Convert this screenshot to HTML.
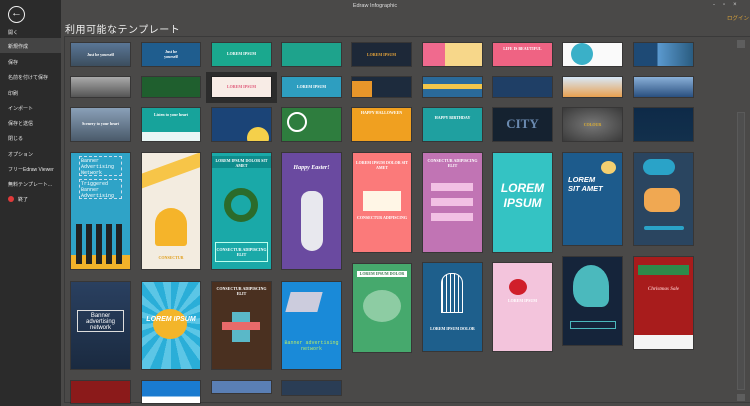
<!DOCTYPE html>
<html><head><meta charset="utf-8"><style>
*{margin:0;padding:0;box-sizing:border-box}
body{width:750px;height:406px;overflow:hidden;background:#4a4948;font-family:"Liberation Sans","Noto Sans CJK JP",sans-serif;position:relative}
.sb{position:absolute;left:0;top:0;width:61px;height:406px;background:#2b2b2b}
.mi{position:absolute;left:8px;font-size:5px;color:#e6e6e6;white-space:nowrap}
.sel{position:absolute;left:0;top:38px;width:61px;height:15px;background:#444}
.c{position:absolute;overflow:hidden;color:#fff;font-family:"Liberation Serif",serif;font-weight:bold;font-size:4px;text-align:center;box-shadow:0 0 0 1px rgba(0,0,0,.25)}
.t{position:absolute;left:0;right:0}
</style></head><body>
<div class="sb">
 <div style="position:absolute;left:8px;top:6px;width:17px;height:17px;border:1.5px solid #eee;border-radius:50%;color:#eee;font-size:11px;line-height:13px;text-align:center">&#8592;</div>
 <div class="sel"></div>
 <div class="mi" style="top:29px">開く</div>
 <div class="mi" style="top:43px">新規作成</div>
 <div class="mi" style="top:59px">保存</div>
 <div class="mi" style="top:74px">名前を付けて保存</div>
 <div class="mi" style="top:90px">印刷</div>
 <div class="mi" style="top:105px">インポート</div>
 <div class="mi" style="top:120px">保存と送信</div>
 <div class="mi" style="top:135px">閉じる</div>
 <div class="mi" style="top:151px">オプション</div>
 <div class="mi" style="top:166px">フリーEdraw Viewer</div>
 <div class="mi" style="top:181px">無料テンプレート...</div>
 <div style="position:absolute;left:8px;top:196px;width:6px;height:6px;border-radius:50%;background:#e03a3a"></div>
 <div class="mi" style="top:196px;left:18px">終了</div>
</div>
<div style="position:absolute;left:0;right:0;top:3px;text-align:center;font-size:5.5px;color:#ddd">Edraw Infographic</div>
<div style="position:absolute;left:713px;top:2px;font-size:6px;color:#ccc;letter-spacing:8px;white-space:nowrap">-▫×</div>
<div style="position:absolute;left:727px;top:14px;font-size:5.5px;color:#d9a23a;white-space:nowrap">ログイン</div>
<div style="position:absolute;left:65px;top:21px;font-size:10px;color:#eee;letter-spacing:.5px">利用可能なテンプレート</div>
<div style="position:absolute;left:64px;top:36px;width:686px;height:367px;border:1px solid #3a3a3a;border-right:none"></div>
<div style="position:absolute;left:737px;top:40px;width:8px;height:8px;background:#5e5e5e"></div>
<div style="position:absolute;left:737px;top:112px;width:8px;height:278px;background:#4e4e4e;border:1px solid #5a5a5a"></div>
<div style="position:absolute;left:737px;top:394px;width:8px;height:7px;background:#5e5e5e"></div>
<div style="position:absolute;left:206px;top:72px;width:71px;height:31px;background:#2c2c2c"></div>

<!-- row1 -->
<div class="c" style="left:71px;top:43px;width:59px;height:23px;background:linear-gradient(#5a7696,#3c4e5e)"><div class="t" style="top:9px">Just be yourself</div></div>
<div class="c" style="left:142px;top:43px;width:58px;height:23px;background:#1f5d8e"><div class="t" style="top:6px">Just be<br>yourself</div></div>
<div class="c" style="left:212px;top:43px;width:59px;height:23px;background:#1aa88e"><div class="t" style="top:8px">LOREM IPSUM</div></div>
<div class="c" style="left:282px;top:43px;width:59px;height:23px;background:#1ea38c"></div>
<div class="c" style="left:352px;top:43px;width:59px;height:23px;background:#1d2838"><div class="t" style="top:9px;color:#e8a53a">LOREM IPSUM</div></div>
<div class="c" style="left:423px;top:43px;width:59px;height:23px;background:#f7d78a"><div style="position:absolute;left:0;top:0;width:22px;height:23px;background:#f06a8e"></div></div>
<div class="c" style="left:493px;top:43px;width:59px;height:23px;background:#ef6383"><div class="t" style="top:3px">LIFE IS BEAUTIFUL</div></div>
<div class="c" style="left:563px;top:43px;width:59px;height:23px;background:#fafafa"><div style="position:absolute;left:8px;top:0;width:22px;height:22px;border-radius:50%;background:#3ab0c8"></div></div>
<div class="c" style="left:634px;top:43px;width:59px;height:23px;background:linear-gradient(90deg,#1e4a75 40%,#5b9ad0 40%,#2a5c80)"></div>
<!-- row2 -->
<div class="c" style="left:71px;top:77px;width:59px;height:20px;background:linear-gradient(#aaa,#555)"></div>
<div class="c" style="left:142px;top:77px;width:58px;height:20px;background:#1f5f2e"></div>
<div class="c" style="left:212px;top:77px;width:59px;height:20px;background:#f8ece6"><div class="t" style="top:7px;color:#e05a7a">LOREM IPSUM</div></div>
<div class="c" style="left:282px;top:77px;width:59px;height:20px;background:#2e9ec0"><div class="t" style="top:7px">LOREM IPSUM</div></div>
<div class="c" style="left:352px;top:77px;width:59px;height:20px;background:#1d2b3d"><div style="position:absolute;left:0;top:4px;width:20px;height:16px;background:#e8962a"></div></div>
<div class="c" style="left:423px;top:77px;width:59px;height:20px;background:#2a6a9a"><div style="position:absolute;left:0;right:0;top:7px;height:5px;background:#f2c64a"></div></div>
<div class="c" style="left:493px;top:77px;width:59px;height:20px;background:#1f3f66"></div>
<div class="c" style="left:563px;top:77px;width:59px;height:20px;background:linear-gradient(#d8e8f8,#e8a050)"></div>
<div class="c" style="left:634px;top:77px;width:59px;height:20px;background:linear-gradient(#8ab0d8,#2a5080)"></div>
<!-- row3 -->
<div class="c" style="left:71px;top:108px;width:59px;height:33px;background:linear-gradient(#8aa0b8,#4a5a6a)"><div class="t" style="top:13px">Scenery to your heart</div></div>
<div class="c" style="left:142px;top:108px;width:58px;height:33px;background:#17a39b"><div class="t" style="top:4px">Listen to your heart</div><div style="position:absolute;left:0;right:0;bottom:0;height:9px;background:#fff;opacity:.9"></div></div>
<div class="c" style="left:212px;top:108px;width:59px;height:33px;background:#1b4477"><div style="position:absolute;right:2px;bottom:-8px;width:22px;height:22px;border-radius:50%;background:#f5d04a"></div></div>
<div class="c" style="left:282px;top:108px;width:59px;height:33px;background:#2e7d3e"><div style="position:absolute;left:5px;top:4px;width:20px;height:20px;border-radius:50%;border:2px solid #fff"></div></div>
<div class="c" style="left:352px;top:108px;width:59px;height:33px;background:#f0a020"><div class="t" style="top:2px;color:#fff">HAPPY HALLOWEEN</div></div>
<div class="c" style="left:423px;top:108px;width:59px;height:33px;background:#1fa0a0"><div class="t" style="top:7px">HAPPY BIRTHDAY</div></div>
<div class="c" style="left:493px;top:108px;width:59px;height:33px;background:#152230"><div class="t" style="top:8px;font-size:13px;color:#6a8ab0">CITY</div></div>
<div class="c" style="left:563px;top:108px;width:59px;height:33px;background:radial-gradient(#777,#3a3a3a)"><div class="t" style="top:14px;color:#e0b030">COLOUR</div></div>
<div class="c" style="left:634px;top:108px;width:59px;height:33px;background:linear-gradient(#0e2a48,#12304c)"></div>
<!-- tall row4 -->
<div class="c" style="left:71px;top:153px;width:59px;height:116px;background:#2fa3c7;font-family:'Liberation Mono',monospace;font-weight:normal;font-size:5px;text-align:left"><div style="position:absolute;left:8px;top:3px;width:43px;height:20px;border:1px dashed #cde;padding:1px">Banner Advertising Network</div><div style="position:absolute;left:8px;top:26px;width:43px;height:20px;border:1px dashed #cde;padding:1px">Triggered Banner Advertising</div><div style="position:absolute;left:0;right:0;bottom:0;height:14px;background:#f2b22a"></div><div style="position:absolute;left:5px;bottom:5px;width:50px;height:40px;background:repeating-linear-gradient(90deg,#222 0 6px,transparent 6px 10px)"></div></div>
<div class="c" style="left:142px;top:153px;width:58px;height:116px;background:#f3ece0"><div style="position:absolute;left:-10px;top:10px;width:80px;height:14px;background:#f7c548;transform:rotate(-20deg)"></div><div style="position:absolute;left:13px;top:55px;width:32px;height:38px;background:#f5b42a;border-radius:16px 16px 3px 3px"></div><div class="t" style="top:102px;color:#e0a020">CONSECTUR</div></div>
<div class="c" style="left:212px;top:153px;width:59px;height:116px;background:#1aa9a8"><div class="t" style="top:3px;height:12px;background:#0e8c8c;padding-top:2px">LOREM IPSUM DOLOR SIT AMET</div><div style="position:absolute;left:12px;top:35px;width:34px;height:34px;border-radius:50%;border:7px solid #2b6b2b"></div><div style="position:absolute;left:3px;top:89px;width:53px;height:20px;border:1px solid #bfe;padding-top:4px">CONSECTUR ADIPISCING ELIT</div></div>
<div class="c" style="left:282px;top:153px;width:59px;height:116px;background:#6a4aa0"><div class="t" style="top:12px;font-style:italic;font-size:6px">Happy Easter!</div><div style="position:absolute;left:19px;top:38px;width:22px;height:60px;background:#e8e8ee;border-radius:10px 10px 12px 12px"></div></div>
<div class="c" style="left:353px;top:153px;width:58px;height:99px;background:#fb7a7a"><div class="t" style="top:7px">LOREM IPSUM DOLOR SIT AMET</div><div style="position:absolute;left:10px;top:38px;width:38px;height:20px;background:#fff6e6"></div><div class="t" style="top:62px">CONSECTUR ADIPISCING</div></div>
<div class="c" style="left:423px;top:153px;width:59px;height:99px;background:#c174b4"><div class="t" style="top:5px">CONSECTUR ADIPISCING ELIT</div><div style="position:absolute;left:8px;top:30px;width:42px;height:8px;background:#f2c0e4"></div><div style="position:absolute;left:8px;top:45px;width:42px;height:8px;background:#f2c0e4"></div><div style="position:absolute;left:8px;top:60px;width:42px;height:8px;background:#f2c0e4"></div></div>
<div class="c" style="left:493px;top:153px;width:59px;height:99px;background:#34c3c3;font-family:'Liberation Sans',sans-serif;font-style:italic"><div class="t" style="top:28px;font-size:12px;line-height:15px">LOREM<br>IPSUM</div></div>
<div class="c" style="left:563px;top:153px;width:59px;height:92px;background:#1d5b8c;font-family:'Liberation Sans',sans-serif;font-style:italic"><div style="position:absolute;right:6px;top:8px;width:15px;height:13px;background:#f4d070;border-radius:50%"></div><div class="t" style="top:22px;font-size:7.5px;text-align:left;left:5px">LOREM<br>SIT AMET</div></div>
<div class="c" style="left:634px;top:153px;width:59px;height:92px;background:#2a4560"><div style="position:absolute;left:9px;top:6px;width:32px;height:16px;background:#2aa3c8;border-radius:8px"></div><div style="position:absolute;left:10px;top:35px;width:36px;height:24px;background:#f0a852;border-radius:8px"></div><div style="position:absolute;left:10px;top:73px;width:40px;height:4px;background:#2aa3c8;border-radius:2px"></div></div>
<!-- row5 -->
<div class="c" style="left:71px;top:282px;width:59px;height:87px;background:linear-gradient(#2a4060,#1a2a40);font-family:'Liberation Sans',sans-serif;font-size:6px;font-weight:normal"><div style="position:absolute;left:6px;top:28px;width:47px;height:22px;border:1px solid #ddd;padding-top:2px">Banner advertising network</div></div>
<div class="c" style="left:142px;top:282px;width:58px;height:87px;background:repeating-conic-gradient(from 0deg at 50% 45%,#2aaed8 0 12deg,#5cc6e6 12deg 24deg)"><div style="position:absolute;left:11px;top:27px;width:34px;height:30px;border-radius:50%;background:#f3b52a"></div><div class="t" style="top:34px;font-family:'Liberation Sans',sans-serif;font-style:italic;font-size:7px">LOREM IPSUM</div></div>
<div class="c" style="left:212px;top:282px;width:59px;height:87px;background:#4a3020"><div class="t" style="top:4px">CONSECTUR ADIPISCING ELIT</div><div style="position:absolute;left:20px;top:30px;width:18px;height:30px;background:#5ab8c8"></div><div style="position:absolute;left:10px;top:40px;width:38px;height:8px;background:#e86a6a"></div></div>
<div class="c" style="left:282px;top:282px;width:59px;height:87px;background:#1a8ad8"><div style="position:absolute;left:6px;top:10px;width:32px;height:20px;background:#ccd;transform:skewX(-15deg)"></div><div class="t" style="top:58px;color:#b6ea6a;font-family:'Liberation Mono',monospace;font-weight:normal;font-size:5px">Banner advertising network</div></div>
<div class="c" style="left:353px;top:264px;width:58px;height:88px;background:#46a96d"><div class="t" style="top:7px;left:4px;right:4px;background:#fff;color:#3a7a50;height:6px">LOREM IPSUM DOLOR</div><div style="position:absolute;left:10px;top:26px;width:38px;height:32px;border-radius:50%;background:#9fd4b0;opacity:.8"></div></div>
<div class="c" style="left:423px;top:263px;width:59px;height:88px;background:#1e5f8c"><div style="position:absolute;left:18px;top:10px;width:22px;height:40px;border:1.5px solid #fff;border-radius:10px 10px 0 0;background:repeating-linear-gradient(90deg,#fff 0 1px,transparent 1px 4px)"></div><div class="t" style="top:63px">LOREM IPSUM DOLOR</div></div>
<div class="c" style="left:493px;top:263px;width:59px;height:88px;background:#f3c4dc"><div style="position:absolute;left:16px;top:16px;width:18px;height:16px;border-radius:50%;background:#d01e2a"></div><div class="t" style="top:35px">LOREM IPSUM</div></div>
<div class="c" style="left:563px;top:257px;width:59px;height:88px;background:#15243a"><div style="position:absolute;left:10px;top:8px;width:36px;height:42px;background:#4bb9bd;border-radius:50% 50% 20% 40%"></div><div style="position:absolute;left:7px;top:64px;width:46px;height:8px;border:1px solid #4bb9bd"></div></div>
<div class="c" style="left:634px;top:257px;width:59px;height:92px;background:#a81c1c"><div style="position:absolute;left:4px;top:8px;width:51px;height:10px;background:#2e8a4a"></div><div class="t" style="top:30px;font-style:italic;font-size:5px;color:#f0b0b0">Christmas Sale</div><div style="position:absolute;left:0;right:0;bottom:0;height:14px;background:#f4f4f4"></div></div>
<!-- bottom row -->
<div class="c" style="left:71px;top:381px;width:59px;height:22px;background:#8b1a1a"></div>
<div class="c" style="left:142px;top:381px;width:58px;height:22px;background:linear-gradient(#1a7bd0 70%,#fff 70%)"></div>
<div class="c" style="left:212px;top:381px;width:59px;height:12px;background:#5a7fb5"></div>
<div class="c" style="left:282px;top:381px;width:59px;height:14px;background:#2a3d55"></div>
</body></html>
